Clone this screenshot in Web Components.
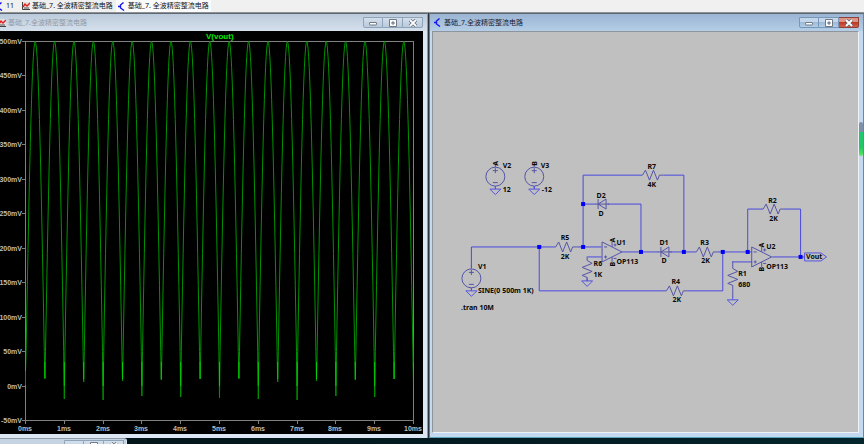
<!DOCTYPE html>
<html lang="zh-CN">
<head>
<meta charset="utf-8">
<title>基础_7.全波精密整流电路</title>
<style>
  html, body { height: 100%; margin: 0; }
  body { background: #03191e; font-family: "Noto Sans", "Noto Sans CJK SC", sans-serif; overflow: hidden; }
</style>
</head>
<body>
<sim-app></sim-app>
<script>
const define = (name, html, extra) => customElements.define(name, class extends HTMLElement {
  constructor() {
    super();
    this.attachShadow({ mode: "open" });
    const t = document.createElement("template");
    t.innerHTML = html;
    this.shadowRoot.append(t.content.cloneNode(true));
  }
  connectedCallback() { if (extra) extra(this); }
});

/* Small document icons: schematic sheet and waveform trace */
define("sheet-icon", `
<style>:host{display:block;flex:none;width:8px;height:9px}svg{display:block}</style>
<svg width="8" height="9" viewBox="0 0 8 9" fill="none" stroke="#1414f0" aria-hidden="true">
  <path d="M0 4.500H2M5.500 .5L2.500 3V6L6 8.500" stroke-width="1.400"/>
</svg>`);
define("wave-icon", `
<style>:host{display:block;flex:none;width:8px;height:8px}svg{display:block}</style>
<svg width="8" height="8" viewBox="0 0 8 8" fill="none" aria-hidden="true">
  <path d="M0 0H8V8H0z" fill="#e4dede"/>
  <path d="M.5 0V7.500H8" stroke="#444"/>
  <path d="M1 5L3 2L5 4L8 1" stroke="#e02020" stroke-width="1.400"/>
  <path d="M2 6H7" stroke="#555"/>
</svg>`);

define("doc-tab", `
<style>
  :host{display:block;flex:none}
  button{all:unset;box-sizing:border-box;display:flex;align-items:center;gap:2px;height:12px;padding:0 2px;font-size:7px;line-height:12px;color:#111;white-space:nowrap}
  :host([active]) button{background:#fbfbfb}
</style>
<button type="button" role="tab"><slot name="icon"></slot><slot></slot></button>`);

define("tab-strip", `
<style>
  :host{display:flex;align-items:flex-start;gap:1px;height:13px;background:#f0f0f0;border-bottom:1px solid #8d9297;box-sizing:border-box;overflow:hidden}
  .edge{margin-left:-6px;margin-right:3px}
</style>
<doc-tab class="edge"><sheet-icon slot="icon"></sheet-icon>11</doc-tab>
<doc-tab><wave-icon slot="icon"></wave-icon>基础_7. 全波精密整流电路</doc-tab>
<doc-tab active><sheet-icon slot="icon"></sheet-icon>基础_7. 全波精密整流电路</doc-tab>`);

define("window-buttons", `
<style>
  :host{display:flex;flex:none}
  button{all:unset;box-sizing:border-box;width:20px;height:11px;display:grid;place-items:center;border:1px solid #8fa3b9;border-left-width:0;background:linear-gradient(#d3dfec,#b9cadd)}
  button:first-of-type{border-left-width:1px;border-radius:0 0 0 2px}
  button:last-child{border-radius:0 0 2px 0}
  :host([focused]) button{background:linear-gradient(#c3d6ea 45%,#9dbbd9 50%,#b3cde6);border-color:#7796b8}
  :host([focused]) button:last-child{background:linear-gradient(#dd9484 40%,#bf3a26 50%,#cf604a);border-color:#8c4038}
  svg{display:block}
</style>
<button type="button" aria-label="Minimize"><svg width="10" height="8" viewBox="0 0 10 8"><rect x="1.500" y="3.500" width="7" height="2.500" rx=".5" fill="#fff" stroke="#6f7884"/></svg></button>
<button type="button" aria-label="Restore"><svg width="10" height="8" viewBox="0 0 10 8"><path d="M1.500 .5h7v7h-7zM4 3v2h2V3z" fill="#fff" fill-rule="evenodd" stroke="#6f7884"/></svg></button>
<button type="button" aria-label="Close"><svg width="10" height="8" viewBox="0 0 10 8"><path d="M2 1L8 7M8 1L2 7" stroke="#5c6470" stroke-width="3.200"/><path d="M2 1L8 7M8 1L2 7" stroke="#fff" stroke-width="1.800"/></svg></button>`);

define("mdi-window", `
<style>
  :host{display:flex;flex-direction:column;box-sizing:border-box;min-width:0;min-height:0;padding:0 4px 4px 0;background:#dce7f3;border-top:1px solid #5f6870;border-right:1px solid #8c9aa8;color:#9199a3}
  :host([focused]){padding:0 4px 4px 2px;background:#c3d9f0;border-left:1px solid #6a7784;border-right:1px solid #4b94ad;border-bottom:1px solid #5aa7bd;color:#18202c}
  header{display:flex;align-items:center;gap:2px;height:17px;flex:none;box-sizing:border-box;font-size:7px;line-height:17px;background:linear-gradient(#bccbdb,#d5e0ec);margin-right:-4px;padding-right:4px}
  :host([focused]) header{background:linear-gradient(#9ab5d3,#b5cee7);margin-left:-2px;padding-left:4px;gap:2px}
  h2{flex:1;margin:0;font:inherit;white-space:nowrap}
  .body{flex:1;min-height:0;min-width:0;overflow:hidden}
  :host([focused]) .body{border:1px solid #8e949c;border-right-color:#eef2f6;border-bottom-color:#eef2f6}
</style>
<header><slot name="icon"></slot><h2><slot name="title"></slot></h2><window-buttons></window-buttons></header>
<div class="body"><slot></slot></div>`,
el => { if (el.hasAttribute("focused")) el.shadowRoot.querySelector("window-buttons").setAttribute("focused", ""); });

define("wave-plot", `
<style>
  :host{display:block;height:100%;background:#000}
  svg{display:block;width:100%;height:100%}
  text{font:bold 7px "Liberation Sans",Arial,sans-serif;fill:#bcbcbc}
  .name{font-size:8px;fill:#00f000}
  .axis{stroke:#808080;fill:none;shape-rendering:crispEdges}
  .trace{stroke:#009400;fill:none;stroke-linejoin:round}
  .hot{stroke:#00d000;fill:none}
</style>
<svg viewBox="0 31 423 402" preserveAspectRatio="xMinYMin meet">
  <text class="name" x="206" y="39">V(vout)</text>
  <g id="grid"></g><path class="trace" id="trace"/><path class="hot" id="hot"/>
</svg>`, el => {
  const root = el.shadowRoot, left = 25, zero = 385, half = 19.4;
  let axis = "M25.500 41.500H413.500V420.500H25.500Z", labels = "";
  for (let i = 0; i <= 11; i++) {
    const y = Math.round(41 + i * 34.45);
    axis += `M22 ${y + .5}H25`;
    labels += `<text x="22" y="${y + 3}" text-anchor="end">${500 - i * 50}mV</text>`;
  }
  for (let i = 0; i <= 10; i++) {
    const x = Math.round(left + i * 38.8);
    axis += `M${x + .5} 420V424`;
    labels += `<text x="${x}" y="431" text-anchor="middle">${i}ms</text>`;
  }
  root.getElementById("grid").innerHTML = `<path class="axis" d="${axis}"/>${labels}`;
  let d = "M25.500 385V371", hot = "M25.500 350V371";
  for (let k = 0; k < 20; k++) {
    const x0 = left + .5 + k * half;
    for (let s = 1; s < 32; s++) d += `L${(x0 + half * s / 32).toFixed(2)} ${(zero - 343.5 * Math.sin(Math.PI * s / 32)).toFixed(2)}`;
    const x1 = (x0 + half).toFixed(2);
    const low = k === 19 ? 385 : k % 2 ? 396 + (k * 3) % 5 : 378 + (k * 2) % 5;
    d += `L${x1} ${low}`;
    hot += `M${x1} 362V${k % 2 ? 386 : 379}`;
  }
  root.getElementById("trace").setAttribute("d", d);
  root.getElementById("hot").setAttribute("d", hot);
});

define("circuit-schematic", `
<style>
  :host{display:block;height:100%;background:#c0c0c0}
  svg{display:block;width:100%;height:100%}
  text{font:bold 7px "Noto Sans","Open Sans",sans-serif;fill:#080808}
  .wire{stroke:#4848e0;fill:none}
  .part{stroke:#5454a8;fill:none}
  .gnd{stroke:#5454e0;fill:none}
  .dot{fill:#0000f4}
</style>
<svg viewBox="433 32 425 401" preserveAspectRatio="xMinYMin meet">
  <defs>
    <path id="res" d="M0 0L3 -5L7 5L11 -5L15 5L17 0H21"/>
    <path id="gnd" d="M0 -3V0M-5.500 0H5.500L0 5.500Z"/>
    <g id="src"><circle r="9.500"/><path d="M0 -13V-9.500M-2.500 -6H2.500M0 -8.500V-3.500M-2.500 6H2.500M0 9.500V12"/></g>
    <path id="dio" d="M0 -5V5M0 0L8 -5V5ZM-3 0H11"/>
    <path id="amp" d="M0 -10V10L20 0ZM2 -5H5M2 5H5M3.500 3.500V6.500M10 -10V-5M10 5V10M11.500 -7H14.500M13 -8.500V-5.500M11.500 6.500H14.500"/>
    <rect id="dot" x="-2" y="-2" width="4" height="4"/>
  </defs>
  <path class="wire" d="M471.500 268V247.500H556M539.500 247.500V291.500H667M688 291.500H723.500V252.500M577 247.500H602M583.500 247.500V175.500H643M664 175.500H684.500V252.500M583.500 204.500H596M608 204.500H641.500V252.500M622 252.500H659M671 252.500H697M718 252.500H753M748.500 252.500V209.500H764M785 209.500H801.500V257.500M773 257.500H806M602 257.500H588M753 262.500H733"/>
  <g class="part">
    <use href="#res" x="556" y="247.500"/><use href="#res" x="643" y="175.500"/><use href="#res" x="667" y="291.500"/>
    <use href="#res" x="697" y="252.500"/><use href="#res" x="764" y="209.500"/>
    <use href="#res" transform="translate(587.500 261) rotate(90)"/><path d="M587.500 257V261"/>
    <use href="#res" transform="translate(733.500 269) rotate(90)"/><path d="M733.500 262V269M733.500 290V298"/>
    <use href="#src" x="471.500" y="279"/><use href="#src" x="495.500" y="177"/><use href="#src" x="534.500" y="177"/>
    <use href="#dio" x="598.500" y="204.500"/><use href="#dio" x="661.500" y="252.500"/>
    <use href="#amp" x="602.500" y="252.500"/><use href="#amp" x="752.500" y="257.500"/>
  </g>
  <g class="gnd">
    <use href="#gnd" x="471.500" y="291.500"/><use href="#gnd" x="495.500" y="189.500"/><use href="#gnd" x="534.500" y="189.500"/>
    <use href="#gnd" x="587.500" y="281.500"/><use href="#gnd" x="733.500" y="300.500"/>
    <path d="M805.500 253.500H822L827.500 257.500L822 261.500H805.500Z"/>
  </g>
  <g class="dot">
    <use href="#dot" x="539.500" y="247.500"/><use href="#dot" x="583.500" y="247.500"/><use href="#dot" x="583.500" y="204.500"/>
    <use href="#dot" x="641.500" y="252.500"/><use href="#dot" x="684.500" y="252.500"/><use href="#dot" x="723.500" y="252.500"/>
    <use href="#dot" x="748.500" y="252.500"/><use href="#dot" x="801.500" y="257.500"/>
  </g>
  <text x="503" y="168">V2</text><text x="503" y="192">12</text>
  <text x="541" y="168">V3</text><text x="542" y="192">-12</text>
  <text transform="translate(498 166) rotate(-90)">A</text><text transform="translate(537 166) rotate(-90)">B</text>
  <text x="648" y="169">R7</text><text x="648" y="187">4K</text>
  <text x="597" y="198">D2</text><text x="599" y="216">D</text>
  <text x="561" y="241">R5</text><text x="561" y="260">2K</text>
  <text x="617" y="246">U1</text><text x="617" y="265">OP113</text>
  <text transform="translate(615 243) rotate(-90)">A</text><text transform="translate(615 267) rotate(-90)">B</text>
  <text x="594" y="267">R6</text><text x="594" y="278">1K</text>
  <text x="660" y="246">D1</text><text x="662" y="264">D</text>
  <text x="672" y="285">R4</text><text x="673" y="303">2K</text>
  <text x="701" y="246">R3</text><text x="702" y="264">2K</text>
  <text x="769" y="203">R2</text><text x="770" y="221">2K</text>
  <text x="767" y="250">U2</text><text x="767" y="270">OP113</text>
  <text transform="translate(765 248) rotate(-90)">A</text><text transform="translate(765 272) rotate(-90)">B</text>
  <text x="739" y="277">R1</text><text x="739" y="288">680</text>
  <text x="807" y="260">Vout</text>
  <text x="478" y="270">V1</text><text x="478" y="294">SINE(0 500m 1K)</text>
  <text x="461" y="311">.tran 10M</text>
</svg>`);

define("desk-strip", `
<style>
  :host{display:flex;align-items:flex-start;height:6px;overflow:hidden;background:radial-gradient(ellipse at 38% 0,#0a4a66,transparent 4%),radial-gradient(ellipse at 90% 0,#07404a,transparent 5%),linear-gradient(90deg,#021317,#031c22 60%,#03252b)}
  .mini{display:flex;justify-content:flex-end;box-sizing:border-box;width:127px;height:6px;padding:1px 2px 0 0;background:#c6d3e2;border-top:1px solid #8f9cab;border-right:1px solid #dce6f0;border-radius:0 3px 0 0}
</style>
<div class="mini"><window-buttons></window-buttons></div>`);

define("sim-app", `
<style>
  :host{display:grid;grid-template-rows:auto 1fr auto;height:100%;position:relative}
  main{display:grid;grid-template-columns:428fr 435fr;gap:1px;min-height:0;background:#2a3036}
  .meter{position:absolute;right:1px;top:122px;width:4px;height:34px;border-radius:2px;background:linear-gradient(#8090a8 28%,#20c870 30%,#22c864 75%,#5ce860)}
  wave-icon[slot]{margin-left:-2px}
</style>
<tab-strip role="tablist"></tab-strip>
<main>
  <mdi-window><wave-icon slot="icon"></wave-icon><span slot="title">基础_7.全波精密整流电路</span><wave-plot></wave-plot></mdi-window>
  <mdi-window focused><sheet-icon slot="icon"></sheet-icon><span slot="title">基础_7.全波精密整流电路</span><circuit-schematic></circuit-schematic></mdi-window>
</main>
<desk-strip></desk-strip>
<div class="meter"></div>`);
</script>
</body>
</html>
